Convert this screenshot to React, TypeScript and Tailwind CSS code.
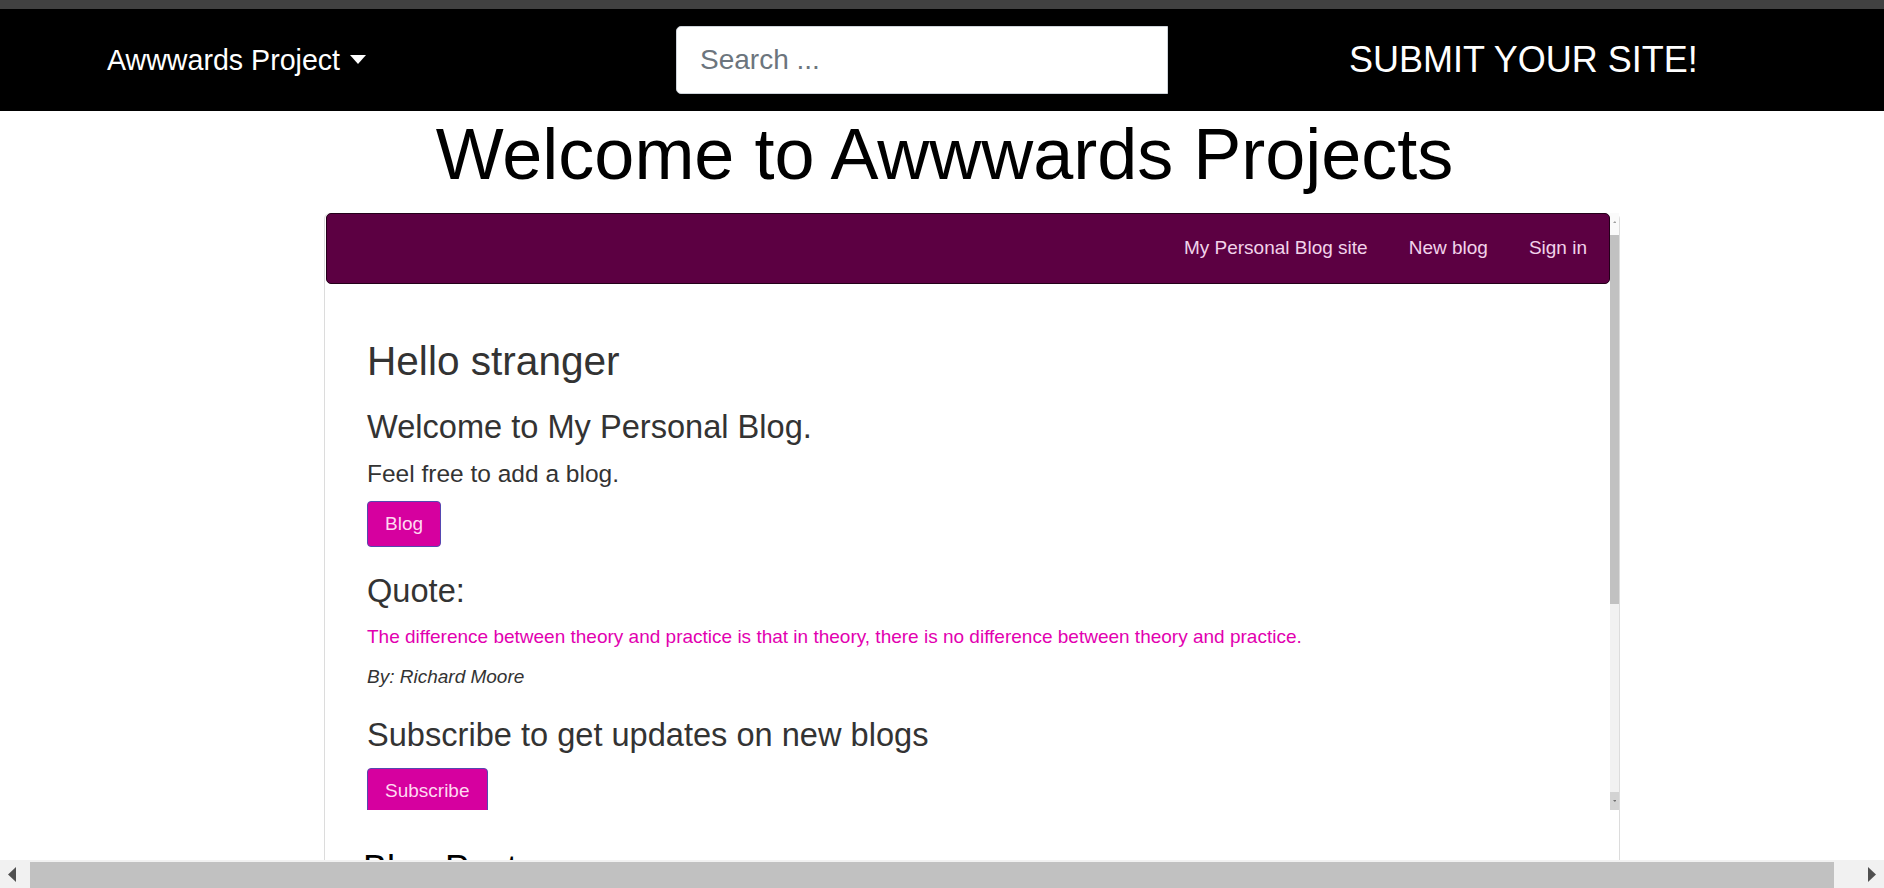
import React from "react";

const Arrow = ({ dir, size = 8, color = "#505050" }: { dir: "l" | "r" | "u" | "d"; size?: number; color?: string }) => {
  const pts = {
    r: "0,0 8,7.5 0,15",
    l: "8,0 0,7.5 8,15",
    u: "0,8 7.5,0 15,8",
    d: "0,0 15,0 7.5,8",
  }[dir];
  const vb = dir === "l" || dir === "r" ? "0 0 8 15" : "0 0 15 8";
  const w = dir === "l" || dir === "r" ? size : size * 1.875;
  const h = dir === "l" || dir === "r" ? size * 1.875 : size;
  return (
    <svg width={w} height={h} viewBox={vb}>
      <polygon points={pts} fill={color} />
    </svg>
  );
};

const FrameScrollbar = () => {
  return (
    <div className="w-[9px] shrink-0 flex flex-col bg-[#f1f1f1]">
      <div className="h-[22px] bg-[#fafafa] flex justify-center pt-[8px]">
        <Arrow dir="u" size={2} color="#a0a0a0" />
      </div>
      <div className="h-[369px] bg-[#c1c1c1]" />
      <div className="flex-1" />
      <div className="h-[18px] bg-[#d3d3d3] flex justify-center items-center">
        <Arrow dir="d" size={2} color="#707070" />
      </div>
    </div>
  );
};

const PinkButton = ({ label }: { label: string }) => (
  <button className="h-[46px] px-[17px] rounded-[4px] border border-[#5548b0] bg-[#d6009f] text-[19px] text-[#ffd9f1] self-start">
    {label}
  </button>
);

const BlogFrame = () => {
  return (
    <div className="h-[597px] flex">
      <div className="flex-1 min-w-0 overflow-hidden">
        <div className="ml-[1px] h-[71px] bg-[#5c0042] border border-[#24001a] rounded-[5px] flex items-center justify-end pr-[22px] gap-[41px] text-[19px] text-[#f2d3ea]">
          <a>My Personal Blog site</a>
          <a>New blog</a>
          <a>Sign in</a>
        </div>
        <div className="pl-[42px] flex flex-col text-[#333333]">
          <h2 className="mt-[53px] text-[40.6px] leading-[48px]">Hello stranger</h2>
          <h3 className="mt-[23px] text-[32.6px] leading-[38px]">Welcome to My Personal Blog.</h3>
          <p className="mt-[10px] text-[24.5px] leading-[36px]">Feel free to add a blog.</p>
          <div className="mt-[9px]">
            <PinkButton label="Blog" />
          </div>
          <h3 className="mt-[25px] text-[32.6px] leading-[38px]">Quote:</h3>
          <p className="mt-[13px] text-[19px] leading-[28px] text-[#e200b0]">
            The difference between theory and practice is that in theory, there is no difference between theory and practice.
          </p>
          <p className="mt-[12px] text-[19px] leading-[28px] italic">By: Richard Moore</p>
          <h3 className="mt-[25px] text-[32.6px] leading-[38px]">Subscribe to get updates on new blogs</h3>
          <div className="mt-[14px]">
            <PinkButton label="Subscribe" />
          </div>
        </div>
      </div>
      <FrameScrollbar />
    </div>
  );
};

const PageScrollbar = () => {
  return (
    <div className="h-[28px] shrink-0 flex bg-[#f1f1f1]">
      <div className="w-[24px] flex items-center justify-center">
        <Arrow dir="l" />
      </div>
      <div className="w-[6px]" />
      <div className="flex-1 mt-[2px] bg-[#c1c1c1]" />
      <div className="w-[26px]" />
      <div className="w-[24px] flex items-center justify-center">
        <Arrow dir="r" />
      </div>
    </div>
  );
};

export default function App() {
  return (
    <div className="h-[888px] w-[1884px] flex flex-col overflow-hidden bg-white font-['Liberation_Sans',Arial,sans-serif]">
      <div className="h-[9px] shrink-0 bg-[#414141]" />
      <nav className="h-[102px] shrink-0 bg-black flex items-center pl-[107px]">
        <div className="w-[569px] flex items-center text-white text-[28.6px]">
          <span>Awwwards Project</span>
          <span className="ml-[10px] w-0 h-0 border-l-[8px] border-r-[8px] border-t-[9px] border-l-transparent border-r-transparent border-t-white" />
        </div>
        <input
          placeholder="Search ..."
          className="w-[492px] h-[68px] rounded-l-[5px] bg-white border border-[#ced4da] pl-[23px] text-[28px] text-[#495057] placeholder:text-[#6c757d] outline-none"
        />
        <span className="ml-[181px] text-white text-[36px]">SUBMIT YOUR SITE!</span>
      </nav>
      <main className="flex-1 min-h-0 overflow-hidden">
        <h1 className="pl-[5px] text-center text-[72px] leading-[86px] text-black mb-[16px]">Welcome to Awwwards Projects</h1>
        <div className="ml-[324px] w-[1296px] border-x border-[#dcdcdc] rounded-t-[6px]">
          <BlogFrame />
          <h2 className="pl-[38px] mt-[37px] text-[36px] leading-[43px] text-black">Blog Posts</h2>
        </div>
      </main>
      <PageScrollbar />
    </div>
  );
}
